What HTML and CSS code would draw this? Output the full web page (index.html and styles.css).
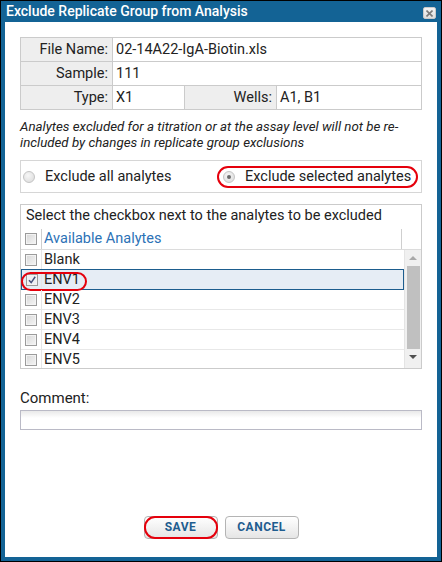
FILE: index.html
```html
<!DOCTYPE html>
<html lang="en">
<head>
  <meta charset="UTF-8">
  <meta name="viewport" content="width=device-width, initial-scale=1">
  <title>Exclude Replicate Group from Analysis</title>
  <link rel="stylesheet" href="styles.css">
</head>
<body>
  <div class="dialog">
    <div class="dialog-title">
      <span>Exclude Replicate Group from Analysis</span>
      <span class="close-btn">
        <svg width="7" height="7" viewBox="0 0 7 7"><path d="M0.5 0.5L6.5 6.5M6.5 0.5L0.5 6.5" stroke="#7a7a7a" stroke-width="1.6"/></svg>
      </span>
    </div>

    <div class="dialog-body">
      <div class="run-info">
        <div class="lbl">File Name:</div><div class="val wide">02-14A22-IgA-Biotin.xls</div>
        <div class="lbl">Sample:</div><div class="val wide">111</div>
        <div class="lbl">Type:</div><div class="val">X1</div>
        <div class="lbl">Wells:</div><div class="val">A1, B1</div>
      </div>

      <p class="note">Analytes excluded for a titration or at the assay level will not be re-included by changes in replicate group exclusions</p>

      <div class="radio-box">
        <label class="radio-opt"><span class="radio"></span>Exclude all analytes</label>
        <label class="radio-opt"><span class="radio checked"></span><span class="marked-text">Exclude selected analytes</span></label>
      </div>

      <div class="analyte-box">
        <div class="hint">Select the checkbox next to the analytes to be excluded</div>
        <div class="grid-head">
          <div class="cb-cell"><span class="cb"></span></div>
          <div class="name-cell">Available Analytes</div>
          <div class="head-fill"></div>
        </div>
        <div class="grid-body">
          <div class="rows">
            <div class="row"><div class="cb-cell"><span class="cb"></span></div><div class="name-cell">Blank</div></div>
            <div class="row selected">
              <div class="cb-cell"><span class="cb checked"><svg width="10" height="10" viewBox="0 0 10 10"><path d="M2 5.2L4.2 7.6L8.2 1.8" fill="none" stroke="#46527e" stroke-width="1.5"/></svg></span></div>
              <div class="name-cell">ENV1</div>
              <span class="ring"></span>
            </div>
            <div class="row"><div class="cb-cell"><span class="cb"></span></div><div class="name-cell">ENV2</div></div>
            <div class="row"><div class="cb-cell"><span class="cb"></span></div><div class="name-cell">ENV3</div></div>
            <div class="row"><div class="cb-cell"><span class="cb"></span></div><div class="name-cell">ENV4</div></div>
            <div class="row"><div class="cb-cell"><span class="cb"></span></div><div class="name-cell">ENV5</div></div>
          </div>
          <div class="scrollbar">
            <span class="arrow up"></span>
            <span class="thumb"></span>
            <span class="arrow down"></span>
          </div>
        </div>
      </div>

      <div class="field-label">Comment:</div>
      <div class="text-input"></div>

      <div class="buttons">
        <span class="btn marked">SAVE</span>
        <span class="btn">CANCEL</span>
      </div>
    </div>
  </div>
</body>
</html>
```

FILE: styles.css
```css
:root {
  --frame: #136395;
  --border: #cbcbcb;
  --text: #222;
  --link: #2c72b6;
  --mark: #e5000c;
}
* {
  box-sizing: border-box;
  margin: 0; padding: 0;
}
html, body {
  width: 442px;
  height: 562px;
  font-family: Roboto, 'Liberation Sans', sans-serif;
  font-size: 14.5px;
  color: var(--text);
  background: #fff;
  overflow: hidden;
}

/* window frame */
.dialog {
  width: 442px;
  height: 562px;
  border: 1px solid #000;
  background: var(--frame);
  padding: 0 4px 4px;
  display: flex;
  flex-direction: column;
}
.dialog-title {
  height: 21px;
  display: flex;
  align-items: center;
  justify-content: space-between;
  padding: 0 1px 0 1px;
  color: #fff;
  font-size: 14px;
  font-weight: 500;
  line-height: 21px;
}
.close-btn {
  width: 13px; height: 12px;
  margin-top: 3px;
  background: linear-gradient(#f4f4f4, #dedede);
  border: 1px solid #c9c9c9;
  border-radius: 2px;
  display: flex;
  align-items: center; justify-content: center;
}
.dialog-body {
  flex: 1;
  background: #fff;
  padding: 15px 15px 18px;
  display: flex;
  flex-direction: column;
}

/* file / sample info */
.run-info {
  display: grid;
  grid-template-columns: 91px 71px 91px 1fr;
  grid-auto-rows: 23px;
  gap: 1px;
  background: var(--border);
  border: 1px solid var(--border);
  line-height: 23px;
}
.run-info .lbl {
  background: #eee;
  text-align: right;
  padding-right: 4px;
}
.run-info .val {
  background: #fff;
  padding-left: 3px;
}
.run-info .wide { grid-column: 2 / 5; }

.note {
  margin: 9px 0;
  font-size: 13.3px;
  font-style: italic;
  line-height: 16px;
}

/* radio choice */
.radio-box {
  height: 33px;
  border: 1px solid #d6d6d6;
  display: grid;
  grid-template-columns: 1fr 1fr;
  align-items: center;
}
.radio-opt {
  display: flex;
  align-items: center;
  gap: 10px;
  padding-left: 2px;
  line-height: 20px;
}
.radio {
  width: 12px; height: 12px;
  border-radius: 50%;
  border: 1px solid #c4c4c4;
  background: radial-gradient(circle at 40% 35%, #f7f7f7, #d9d9d9);
  display: flex;
  align-items: center; justify-content: center;
}
.radio.checked::after {
  content: "";
  width: 4px; height: 4px;
  border-radius: 50%;
  background: #6b6b6b;
}
.marked-text {
  position: relative;
}
.marked-text::before {
  content: "";
  position: absolute;
  left: -28px; right: -7px;
  top: -1px; bottom: -1px;
  border: 2px solid var(--mark);
  border-radius: 11px;
}

/* analytes grid */
.analyte-box {
  margin-top: 11px;
  border: 1px solid var(--border);
}
.hint {
  padding: 1px 5px 0;
  line-height: 20px;
  margin-bottom: 3px;
}
.grid-head {
  display: flex;
  height: 21px;
  border-bottom: 1px solid #dcdcdc;
  line-height: 20px;
}
.grid-head .cb-cell,
.grid-head .name-cell {
  border-right: 1px solid #cfcfcf;
}
.grid-head .name-cell {
  flex: 1;
  color: var(--link);
}
.head-fill { width: 19px; }
.cb-cell {
  width: 21px;
  border-right: 1px solid #e6e6e6;
  display: flex;
  align-items: center; justify-content: center;
}
.name-cell { padding-left: 2px; }
.cb {
  width: 12px; height: 12px;
  border: 1px solid #9b9b9b;
  background: linear-gradient(135deg, #d6d6d6, #f6f6f6);
  box-shadow: inset 0 0 0 1px #f3f3f3;
  display: flex;
  align-items: center; justify-content: center;
}
.cb.checked { background: #eef0f5; }

.grid-body {
  display: flex;
  height: 118px;
}
.rows {
  flex: 1;
  overflow: hidden;
}
.row {
  position: relative;
  display: flex;
  height: 20px;
  line-height: 19px;
  border-bottom: 1px solid #e8e8e8;
}
.row.selected {
  height: 21px;
  margin-top: -1px;
  border: 1px solid #1d5d8e;
  background: #e6edf5;
  line-height: 19px;
}
.row.selected .cb-cell { width: 20px; }
.ring {
  position: absolute;
  left: -1px; top: 2px;
  width: 66px; height: 19px;
  border: 2px solid var(--mark);
  border-radius: 10px;
}
.scrollbar {
  width: 17px;
  background: #f0f0f0;
  border-left: 1px solid #e4e4e4;
  display: flex;
  flex-direction: column;
  align-items: center;
}
.arrow {
  width: 0; height: 0;
  border-left: 4px solid transparent;
  border-right: 4px solid transparent;
}
.arrow.up {
  margin: 6px 0 6px;
  border-bottom: 4px solid #a9a9a9;
}
.arrow.down {
  margin-top: 6px;
  border-top: 4px solid #4f4f4f;
}
.thumb {
  width: 13px;
  height: 83px;
  background: #c0c0c0;
}

/* comment */
.field-label {
  margin-top: 19px;
  line-height: 20px;
  font-size: 15px;
}
.text-input {
  margin-top: 2px;
  height: 20px;
  border: 1px solid #babac6;
  background: linear-gradient(#e9e9e9, #fff 7px);
}

/* footer buttons */
.buttons {
  margin-top: auto;
  display: flex;
  justify-content: center;
  gap: 7px;
}
.btn {
  position: relative;
  width: 74px;
  height: 23px;
  border: 1px solid #b4b4b4;
  border-radius: 4px;
  background: linear-gradient(#fff, #e5e5e5);
  color: #1f5d8f;
  font-size: 12px;
  font-weight: 700;
  letter-spacing: 0.5px;
  text-align: center;
  line-height: 21px;
}
.btn.marked::after {
  content: "";
  position: absolute;
  inset: -1px;
  border: 2px solid var(--mark);
  border-radius: 11px;
}
```
